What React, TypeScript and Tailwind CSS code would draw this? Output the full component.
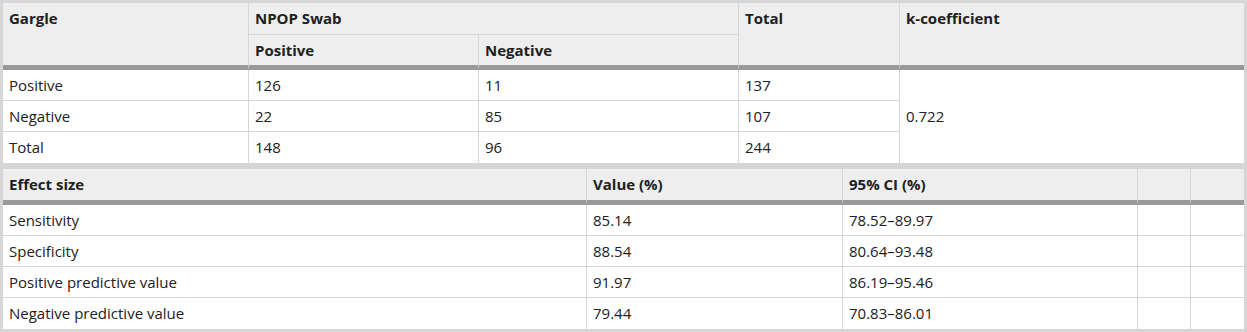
const font = { fontFamily: '"Open Sans", "Noto Sans", sans-serif' };

const effects = [
  { label: "Sensitivity", value: "85.14", ci: "78.52–89.97" },
  { label: "Specificity", value: "88.54", ci: "80.64–93.48" },
  { label: "Positive predictive value", value: "91.97", ci: "86.19–95.46" },
  { label: "Negative predictive value", value: "79.44", ci: "70.83–86.01" },
];

const th = "bg-[#eeeeee] font-bold text-left align-top px-[6px] pt-[5px] border-[#d6d6d6]";
const td = "px-[6px] align-middle border-[#d6d6d6]";

export default function App() {
  return (
    <div className="w-[1247px] bg-white text-[15px] leading-[21px] text-[#202122]" style={font}>
      {/* Contingency table */}
      <table className="w-full table-fixed border-separate border-spacing-0 border-[3px] border-[#d6d6d6]">
        <colgroup>
          <col className="w-[246px]" />
          <col className="w-[230px]" />
          <col className="w-[260px]" />
          <col className="w-[161px]" />
          <col />
        </colgroup>
        <thead>
          <tr>
            <th rowSpan={2} className={`${th} border-r border-b-[5px] border-b-[#999999]`}>Gargle</th>
            <th colSpan={2} className={`${th} h-[32px] border-r border-b`}>NPOP Swab</th>
            <th rowSpan={2} className={`${th} border-r border-b-[5px] border-b-[#999999]`}>Total</th>
            <th rowSpan={2} className={`${th} border-b-[5px] border-b-[#999999]`}>k-coefficient</th>
          </tr>
          <tr>
            <th className={`${th} h-[35px] pt-[4px] border-r border-b-[5px] border-b-[#999999]`}>Positive</th>
            <th className={`${th} h-[35px] pt-[4px] border-r border-b-[5px] border-b-[#999999]`}>Negative</th>
          </tr>
        </thead>
        <tbody>
          <tr>
            <td className={`${td} h-[31px] border-r border-b`}>Positive</td>
            <td className={`${td} border-r border-b`}>126</td>
            <td className={`${td} border-r border-b`}>11</td>
            <td className={`${td} border-r border-b`}>137</td>
            <td rowSpan={3} className={td}>0.722</td>
          </tr>
          <tr>
            <td className={`${td} h-[31px] border-r border-b`}>Negative</td>
            <td className={`${td} border-r border-b`}>22</td>
            <td className={`${td} border-r border-b`}>85</td>
            <td className={`${td} border-r border-b`}>107</td>
          </tr>
          <tr>
            <td className={`${td} h-[31px] border-r`}>Total</td>
            <td className={`${td} border-r`}>148</td>
            <td className={`${td} border-r`}>96</td>
            <td className={`${td} border-r`}>244</td>
          </tr>
        </tbody>
      </table>

      {/* Diagnostic accuracy */}
      <table className="w-full table-fixed border-separate border-spacing-0 border-[3px] border-[#d6d6d6]">
        <colgroup>
          <col className="w-[584px]" />
          <col className="w-[256px]" />
          <col className="w-[295px]" />
          <col className="w-[53px]" />
          <col />
        </colgroup>
        <thead>
          <tr>
            <th className={`${th} h-[36px] border-r border-b-[5px] border-b-[#999999]`}>Effect size</th>
            <th className={`${th} border-r border-b-[5px] border-b-[#999999]`}>Value (%)</th>
            <th className={`${th} border-r border-b-[5px] border-b-[#999999]`}>95% CI (%)</th>
            <th className={`${th} border-r border-b-[5px] border-b-[#999999]`}></th>
            <th className={`${th} border-b-[5px] border-b-[#999999]`}></th>
          </tr>
        </thead>
        <tbody>
          {effects.map((e, i) => {
            const last = i === effects.length - 1;
            const b = last ? "" : "border-b";
            return (
              <tr key={e.label}>
                <td className={`${td} h-[31px] border-r ${b}`}>{e.label}</td>
                <td className={`${td} border-r ${b}`}>{e.value}</td>
                <td className={`${td} border-r ${b}`}>{e.ci}</td>
                <td className={`${td} border-r ${b}`}></td>
                <td className={`${td} ${b}`}></td>
              </tr>
            );
          })}
        </tbody>
      </table>
    </div>
  );
}
